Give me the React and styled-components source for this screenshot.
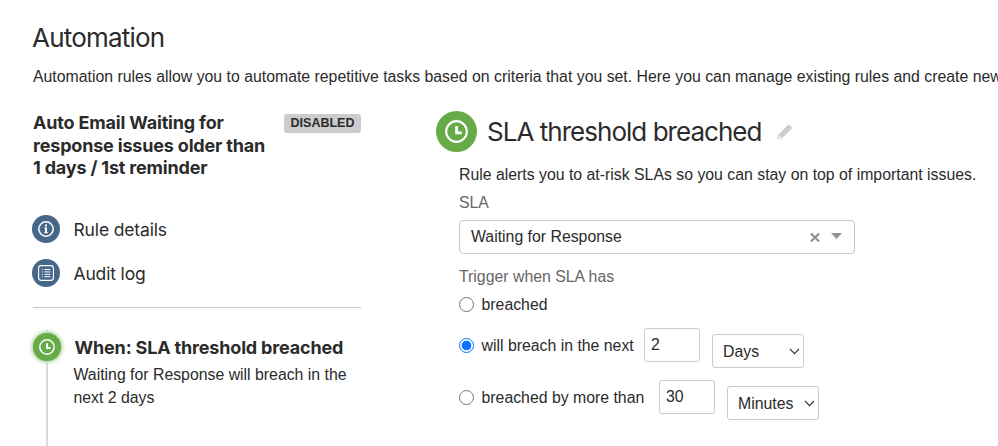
import React, { useState } from 'react';
import styled, { createGlobalStyle } from 'styled-components';

const GlobalStyle = createGlobalStyle`
  * {
    box-sizing: border-box;
  }

  body {
    margin: 0;
    background: #fff;
    color: #2b2b2b;
    font-family: 'Liberation Sans', Arial, sans-serif;
    font-size: 15.84px;
    line-height: 23px;
    overflow: hidden;
  }
`;

const Page = styled.div`
  height: 446px;
  padding: 22px 0 0 33px;
  overflow: hidden;
`;

const PageTitle = styled.h1`
  margin: 0 0 0 -1px;
  font-family: Inter, sans-serif;
  font-size: 26px;
  font-weight: 400;
  line-height: 31px;
  letter-spacing: -0.8px;
`;

const Intro = styled.p`
  margin: 13px 0 0;
  white-space: nowrap;
  line-height: 22px;
`;

const Columns = styled.div`
  display: flex;
  align-items: flex-start;
  margin-top: 23px;
`;

const Sidebar = styled.aside`
  width: 328px;
  flex-shrink: 0;
`;

const RuleHeader = styled.div`
  display: flex;
  justify-content: space-between;
  align-items: flex-start;
`;

const RuleName = styled.h2`
  width: 240px;
  margin: 1px 0 0;
  font-family: Inter, sans-serif;
  font-size: 18px;
  font-weight: 700;
  line-height: 22.7px;
  letter-spacing: -0.18px;
  white-space: nowrap;
`;

const Lozenge = styled.span`
  width: 77px;
  height: 19px;
  margin-top: 3px;
  border-radius: 3px;
  background: #ccc;
  font-size: 12.5px;
  font-weight: 700;
  line-height: 19px;
  text-align: center;
`;

const Nav = styled.nav`
  display: grid;
  gap: 16px;
  margin-top: 35px;
  padding-bottom: 20px;
  border-bottom: 1px solid #c8c8c8;
`;

const NavItem = styled.a`
  display: flex;
  align-items: center;
  gap: 13.5px;
  height: 28px;
  margin-left: -1px;
  font-family: Inter, sans-serif;
  font-size: 17.5px;
  letter-spacing: -0.15px;
`;

const Badge = styled.span`
  display: flex;
  align-items: center;
  justify-content: center;
  flex-shrink: 0;
  width: ${({ $size }) => $size}px;
  height: ${({ $size }) => $size}px;
  border-radius: 50%;
  background: ${({ $color }) => $color};
  box-shadow: ${({ $glow }) => ($glow ? '0 0 5px #67ab49' : 'none')};
`;

const Step = styled.div`
  display: flex;
  gap: 12.5px;
  margin-top: 22px;
`;

const StepRail = styled.div`
  display: flex;
  flex-direction: column;
  align-items: center;
  width: 28px;
`;

const RailLine = styled.span`
  width: 2px;
  height: ${({ $height }) => $height}px;
  margin-bottom: ${({ $gap }) => $gap || 0}px;
  background: #d8d8d8;
`;

const StepBody = styled.div`
  padding-top: 6px;
`;

const StepTitle = styled.h3`
  margin: 0 0 4px 1px;
  font-family: Inter, sans-serif;
  font-size: 18px;
  font-weight: 700;
  line-height: 23px;
  letter-spacing: -0.17px;
  white-space: nowrap;
`;

const Panel = styled.main`
  margin-left: 75px;
`;

const PanelHeader = styled.div`
  display: flex;
  align-items: center;
  height: 41px;
`;

const PanelTitle = styled.h2`
  margin: 0 15px 0 10px;
  font-family: Inter, sans-serif;
  font-size: 26px;
  font-weight: 400;
  line-height: 31px;
  letter-spacing: -0.97px;
  white-space: nowrap;
`;

const Form = styled.div`
  padding: 11px 0 0 23px;
`;

const Description = styled.p`
  margin: 0;
  white-space: nowrap;
`;

const Label = styled.div`
  margin-top: ${({ $top }) => $top}px;
  color: #666;
`;

const Picker = styled.div`
  display: flex;
  align-items: center;
  width: 396px;
  height: 34px;
  margin-top: 6px;
  padding: 0 12px 0 11px;
  border: 1px solid #c8c8c8;
  border-radius: 4px;
`;

const PickerValue = styled.span`
  flex: 1;
  margin-top: -1px;
`;

const PickerIcons = styled.span`
  display: flex;
  align-items: center;
  gap: 11px;
`;

const Option = styled.div`
  display: flex;
  align-items: center;
  height: ${({ $height }) => $height}px;
  margin-top: ${({ $top }) => $top}px;
`;

const Radio = styled.input.attrs({ type: 'radio' })`
  appearance: none;
  width: 15px;
  height: 15px;
  margin: 0 7.5px 0 0;
  border: 1px solid #767676;
  border-radius: 50%;
  background: #fff;

  &:checked {
    border: 1.5px solid #0a73fe;
    background: radial-gradient(circle, #0a73fe 4.4px, #fff 5.2px);
  }
`;

const OptionText = styled.label`
  width: ${({ $width }) => $width}px;
  white-space: nowrap;
`;

const NumberField = styled.input`
  width: 56px;
  height: 34px;
  padding: 0 6px 1px;
  border: 1px solid #ccc;
  border-radius: 3px;
  outline: none;
  color: inherit;
  font: inherit;
`;

const UnitSelect = styled.button`
  display: flex;
  align-items: center;
  justify-content: space-between;
  width: 92px;
  height: 34px;
  margin: 12px 0 0 12px;
  padding: 1px 3px 0 10px;
  border: 1px solid #ccc;
  border-radius: 3px;
  background: #fff;
  color: inherit;
  font: inherit;
`;

const ClockIcon = ({ size }) => (
  <svg width={size} height={size} viewBox="0 0 24 24" fill="none" stroke="#fff">
    <circle cx="12" cy="12" r="10.8" strokeWidth="2.2" />
    <path d="M12.1 6.2v7.2h5.4" strokeWidth="2.9" />
  </svg>
);

const InfoIcon = () => (
  <svg width="16" height="16" viewBox="0 0 16 16" fill="none">
    <circle cx="8" cy="8" r="7.2" stroke="#fff" strokeWidth="1.5" />
    <path d="M7 3.6h2v2H7zM6.2 6.4H9v4.9h.8v1H6.2v-1H7V7.4h-.8z" fill="#fff" />
  </svg>
);

const LogIcon = () => (
  <svg width="16" height="16" viewBox="0 0 16 16" fill="none" stroke="#fff">
    <rect x="0.6" y="0.6" width="14.8" height="14.8" rx="2.6" strokeWidth="1.1" />
    <path d="M3.8 4.5h1.1M6.4 4.5h6M3.8 6.9h1.1M6.4 6.9h6M3.8 9.3h1.1M6.4 9.3h6M3.8 11.7h1.1M6.4 11.7h6" strokeWidth="1" />
  </svg>
);

const PencilIcon = () => (
  <svg width="16" height="16" viewBox="0 0 16 16">
    <path
      d="M1.7 10.2 10.4 1.5q1-.9 2-.6l2.2 2.2q.7.9-.2 1.9l-8.8 8.7z"
      fill="#ccc"
    />
    <path d="M1.7 10.2 5.6 13.7 1.1 14.8q-.7 0-.5-.7z" fill="#e6e6e6" stroke="#ccc" strokeWidth="0.6" />
  </svg>
);

const ClearIcon = () => (
  <svg width="10" height="10" viewBox="0 0 10 10">
    <path d="M0.9 1.4 9.1 9.4M9.1 1.4 0.9 9.4" stroke="#8c8c8c" strokeWidth="2.1" />
  </svg>
);

const CaretIcon = () => (
  <svg width="11" height="8" viewBox="0 0 11 8">
    <path d="M0 0h11L5.5 6z" fill="#939393" />
  </svg>
);

const ChevronIcon = () => (
  <svg width="11" height="8" viewBox="0 0 11 8" fill="none">
    <path d="M1 1l4.5 4.6L10 1" stroke="#333" strokeWidth="1.1" />
  </svg>
);

const options = [
  { id: 'breached', text: 'breached', width: 150, height: 23, top: 5 },
  { id: 'next', text: 'will breach in the next', width: 162.5, height: 34, top: 12, amount: '2', unit: 'Days' },
  { id: 'more', text: 'breached by more than', width: 177.5, height: 34, top: 18, amount: '30', unit: 'Minutes' },
];

const App = () => {
  const [selected, setSelected] = useState('next');

  return (
    <>
      <GlobalStyle />
      <Page>
        <PageTitle>Automation</PageTitle>
        <Intro>
          Automation rules allow you to automate repetitive tasks based on criteria that you set. Here you can manage
          existing rules and create new
        </Intro>
        <Columns>
          <Sidebar>
            <RuleHeader>
              <RuleName>
                Auto Email Waiting for
                <br />
                response issues older than
                <br />1 days / 1st reminder
              </RuleName>
              <Lozenge>DISABLED</Lozenge>
            </RuleHeader>
            <Nav>
              <NavItem>
                <Badge $size={28} $color="#476788">
                  <InfoIcon />
                </Badge>
                Rule details
              </NavItem>
              <NavItem>
                <Badge $size={28} $color="#476788">
                  <LogIcon />
                </Badge>
                Audit log
              </NavItem>
            </Nav>
            <Step>
              <StepRail>
                <RailLine $height={1} $gap={2} />
                <Badge $size={28} $color="#67ab49" $glow>
                  <ClockIcon size={16} />
                </Badge>
                <RailLine $height={100} />
              </StepRail>
              <StepBody>
                <StepTitle>When: SLA threshold breached</StepTitle>
                Waiting for Response will breach in the
                <br />
                next 2 days
              </StepBody>
            </Step>
          </Sidebar>
          <Panel>
            <PanelHeader>
              <Badge $size={41} $color="#67ab49">
                <ClockIcon size={23} />
              </Badge>
              <PanelTitle>SLA threshold breached</PanelTitle>
              <PencilIcon />
            </PanelHeader>
            <Form>
              <Description>Rule alerts you to at-risk SLAs so you can stay on top of important issues.</Description>
              <Label $top={5}>SLA</Label>
              <Picker>
                <PickerValue>Waiting for Response</PickerValue>
                <PickerIcons>
                  <ClearIcon />
                  <CaretIcon />
                </PickerIcons>
              </Picker>
              <Label $top={11}>Trigger when SLA has</Label>
              {options.map((option) => (
                <Option key={option.id} $height={option.height} $top={option.top}>
                  <Radio
                    id={option.id}
                    name="trigger"
                    checked={selected === option.id}
                    onChange={() => setSelected(option.id)}
                  />
                  <OptionText htmlFor={option.id} $width={option.width}>
                    {option.text}
                  </OptionText>
                  {option.unit && (
                    <>
                      <NumberField defaultValue={option.amount} />
                      <UnitSelect>
                        {option.unit}
                        <ChevronIcon />
                      </UnitSelect>
                    </>
                  )}
                </Option>
              ))}
            </Form>
          </Panel>
        </Columns>
      </Page>
    </>
  );
};

export default App;
